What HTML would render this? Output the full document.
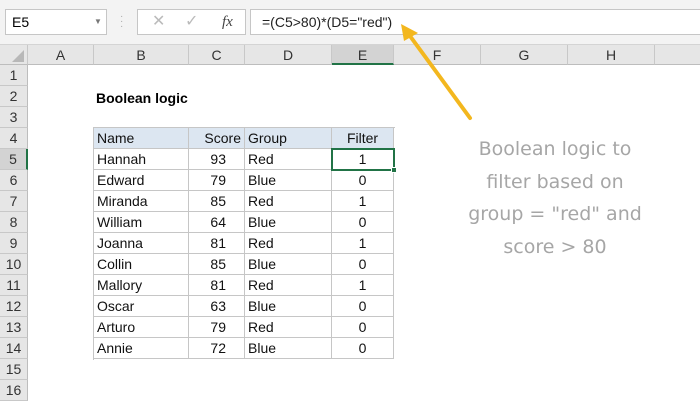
<!DOCTYPE html>
<html><head><style>
body{margin:0;width:700px;height:400px;overflow:hidden;background:#fff;font-family:"Liberation Sans",sans-serif;position:relative}
div{position:absolute;box-sizing:border-box}
.ch{top:45px;height:20px;background:#e6e6e6;border-right:1px solid #c8c8c8;border-bottom:1px solid #bdbdbd;font-size:14px;text-align:center;line-height:20px;color:#333}
.rh{left:0;width:28px;height:21px;background:#e6e6e6;border-bottom:1px solid #c8c8c8;border-right:1px solid #bdbdbd;font-size:14px;text-align:center;line-height:21px;color:#333}
.c{height:21px;border-right:1px solid #c6c6c6;border-bottom:1px solid #c6c6c6;font-size:14px;line-height:21px;padding:0 3px;color:#111}
.r{text-align:right;padding-right:18px}.m{text-align:center}
</style></head><body>
<div style="left:0;top:0;width:700px;height:45px;background:#f3f3f3;border-bottom:1px solid #d4d4d4"></div>
<div style="left:5px;top:9px;width:102px;height:26px;background:#fff;border:1px solid #c6c6c6;font-size:14px;line-height:24px;padding-left:6px">E5<span style="position:absolute;left:88px;top:0;font-size:8px;color:#777">▼</span></div>
<div style="left:120px;top:14px;width:3px;height:16px;color:#aaa;font-size:10px;line-height:5px">·<br>·<br>·</div>
<div style="left:137px;top:9px;width:109px;height:26px;background:#fff;border:1px solid #c6c6c6;font-size:16px;line-height:24px;color:#bbb"><span style="position:absolute;left:14px">✕</span><span style="position:absolute;left:47px">✓</span><span style="position:absolute;left:84px;color:#444;font-style:italic;font-family:'Liberation Serif',serif;font-size:15px">fx</span></div>
<div style="left:250px;top:9px;width:460px;height:26px;background:#fff;border:1px solid #c6c6c6;font-size:14px;line-height:24px;padding-left:11px;color:#222">=(C5&gt;80)*(D5="red")</div>
<div class="ch" style="left:0;width:28px"></div>
<div style="left:12px;top:50px;width:0;height:0;border-left:12px solid transparent;border-bottom:12px solid #b8b8b8"></div>
<div class="ch" style="left:28px;width:66px">A</div>
<div class="ch" style="left:94px;width:95px">B</div>
<div class="ch" style="left:189px;width:56px">C</div>
<div class="ch" style="left:245px;width:87px">D</div>
<div class="ch" style="left:332px;width:62px;background:#d3d3d3;border-bottom:2px solid #217346">E</div>
<div class="ch" style="left:394px;width:87px">F</div>
<div class="ch" style="left:481px;width:87px">G</div>
<div class="ch" style="left:568px;width:87px">H</div>
<div class="ch" style="left:655px;width:50px"></div>
<div class="rh" style="top:65px">1</div><div class="rh" style="top:86px">2</div><div class="rh" style="top:107px">3</div><div class="rh" style="top:128px">4</div>
<div class="rh" style="top:149px;background:#d3d3d3;border-right:2px solid #217346">5</div>
<div class="rh" style="top:170px">6</div><div class="rh" style="top:191px">7</div><div class="rh" style="top:212px">8</div><div class="rh" style="top:233px">9</div><div class="rh" style="top:254px">10</div><div class="rh" style="top:275px">11</div><div class="rh" style="top:296px">12</div><div class="rh" style="top:317px">13</div><div class="rh" style="top:338px">14</div><div class="rh" style="top:359px">15</div><div class="rh" style="top:380px">16</div>
<div style="left:96px;top:90px;font-size:14px;font-weight:bold">Boolean logic</div>
<div style="left:93px;top:127px;width:302px;height:233px;border-top:1px solid #c6c6c6;border-left:1px solid #c6c6c6"></div>
<div style="left:94px;top:128px;width:300px;height:21px;background:#dce6f1"></div>
<div id="t"></div>
<script>
var rows=[["Name","Score","Group","Filter"],["Hannah",93,"Red",1],["Edward",79,"Blue",0],["Miranda",85,"Red",1],["William",64,"Blue",0],["Joanna",81,"Red",1],["Collin",85,"Blue",0],["Mallory",81,"Red",1],["Oscar",63,"Blue",0],["Arturo",79,"Red",0],["Annie",72,"Blue",0]];
var xs=[94,189,245,332,394],h="";
rows.forEach(function(r,i){var y=128+21*i;for(var j=0;j<4;j++){var cl=j==0||j==2?"c":(j==1?"c r":"c m");var txt=r[j];if(i==0&&j==1)cl="c";h+='<div class="'+cl+'" style="left:'+xs[j]+'px;top:'+y+'px;width:'+(xs[j+1]-xs[j])+'px'+(i==0&&j==1?';text-align:right':'')+'">'+txt+'</div>';}});
document.body.insertAdjacentHTML('beforeend',h);
</script>
<div style="left:331px;top:148px;width:64px;height:23px;border:2px solid #217346"></div>
<div style="left:391px;top:167px;width:6px;height:6px;background:#217346;border:1px solid #fff"></div>
<svg style="position:absolute;left:0;top:0" width="700" height="400"><line x1="470" y1="118" x2="410" y2="36" stroke="#f3b71e" stroke-width="4" stroke-linecap="round"/><polygon points="401,24 418,33 404,41" fill="#f3b71e"/></svg>
<div style="left:440px;top:133px;width:230px;text-align:center;font-family:'Comic Sans MS','DejaVu Sans',sans-serif;font-size:19px;line-height:32.5px;color:#a6a6a6">Boolean logic to<br>filter based on<br>group = "red" and<br>score &gt; 80</div>
</body></html>
